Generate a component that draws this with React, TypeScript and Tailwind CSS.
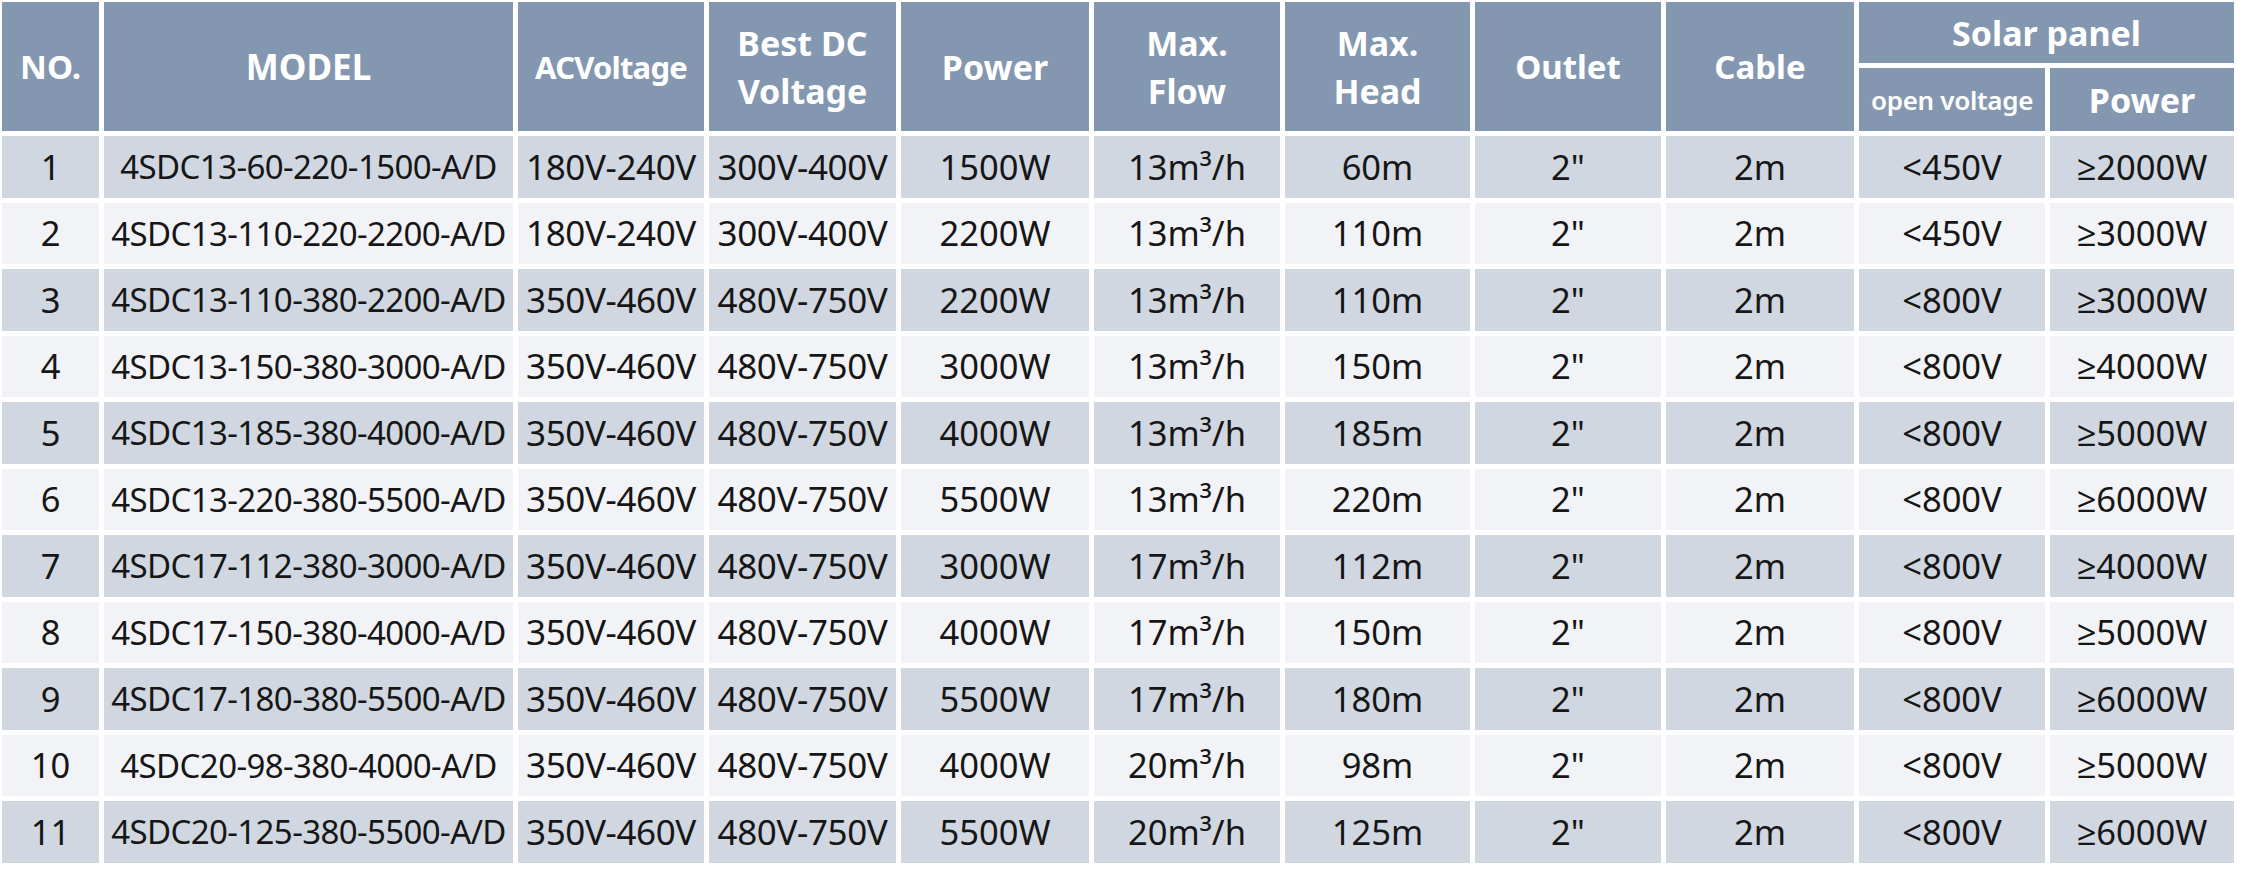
const rows = [
  ['1', '4SDC13-60-220-1500-A/D', '180V-240V', '300V-400V', '1500W', '13m³/h', '60m', '2"', '2m', '<450V', '≥2000W'],
  ['2', '4SDC13-110-220-2200-A/D', '180V-240V', '300V-400V', '2200W', '13m³/h', '110m', '2"', '2m', '<450V', '≥3000W'],
  ['3', '4SDC13-110-380-2200-A/D', '350V-460V', '480V-750V', '2200W', '13m³/h', '110m', '2"', '2m', '<800V', '≥3000W'],
  ['4', '4SDC13-150-380-3000-A/D', '350V-460V', '480V-750V', '3000W', '13m³/h', '150m', '2"', '2m', '<800V', '≥4000W'],
  ['5', '4SDC13-185-380-4000-A/D', '350V-460V', '480V-750V', '4000W', '13m³/h', '185m', '2"', '2m', '<800V', '≥5000W'],
  ['6', '4SDC13-220-380-5500-A/D', '350V-460V', '480V-750V', '5500W', '13m³/h', '220m', '2"', '2m', '<800V', '≥6000W'],
  ['7', '4SDC17-112-380-3000-A/D', '350V-460V', '480V-750V', '3000W', '17m³/h', '112m', '2"', '2m', '<800V', '≥4000W'],
  ['8', '4SDC17-150-380-4000-A/D', '350V-460V', '480V-750V', '4000W', '17m³/h', '150m', '2"', '2m', '<800V', '≥5000W'],
  ['9', '4SDC17-180-380-5500-A/D', '350V-460V', '480V-750V', '5500W', '17m³/h', '180m', '2"', '2m', '<800V', '≥6000W'],
  ['10', '4SDC20-98-380-4000-A/D', '350V-460V', '480V-750V', '4000W', '20m³/h', '98m', '2"', '2m', '<800V', '≥5000W'],
  ['11', '4SDC20-125-380-5500-A/D', '350V-460V', '480V-750V', '5500W', '20m³/h', '125m', '2"', '2m', '<800V', '≥6000W'],
];

const head = 'bg-[#8497b0] text-white font-bold flex items-center justify-center text-center leading-[48px]';

export default function App() {
  return (
    <div className="bg-white w-[2243px] h-[869px] pt-[2px] pl-[2px] font-['Noto_Sans','Open_Sans',sans-serif]">
      <div className="grid grid-cols-[97px_409px_186px_187px_188px_186px_185px_186px_188px_186px_184px] grid-rows-[61px_63px] auto-rows-[61.5px] gap-[5px]">
        <div className={`${head} row-span-2 text-[33px]`}>NO.</div>
        <div className={`${head} row-span-2 text-[35px]`}>MODEL</div>
        <div className={`${head} row-span-2 text-[31px] tracking-[-0.8px]`}>ACVoltage</div>
        <div className={`${head} row-span-2 text-[34px]`}>Best DC<br />Voltage</div>
        <div className={`${head} row-span-2 text-[34px]`}>Power</div>
        <div className={`${head} row-span-2 text-[34px]`}>Max.<br />Flow</div>
        <div className={`${head} row-span-2 text-[34px]`}>Max.<br />Head</div>
        <div className={`${head} row-span-2 text-[33px]`}>Outlet</div>
        <div className={`${head} row-span-2 text-[33px]`}>Cable</div>
        <div className={`${head} col-span-2 text-[34px]`}>Solar panel</div>
        <div className={`${head} text-[26px] font-semibold tracking-[-0.3px]`}>open voltage</div>
        <div className={`${head} text-[34px]`}>Power</div>
        {rows.map((r, i) =>
          r.map((c, j) => (
            <div
              key={`${i}-${j}`}
              className={`flex items-center justify-center whitespace-nowrap text-[#161616] ${
                j === 1 ? 'text-[33px] tracking-[-0.6px]' : j === 2 || j === 3 ? 'text-[35px] tracking-[-0.4px]' : 'text-[34.5px]'
              } ${i % 2 === 0 ? 'bg-[#d0d7e0]' : 'bg-[#f2f3f6]'}`}
            >
              {c}
            </div>
          ))
        )}
      </div>
    </div>
  );
}
